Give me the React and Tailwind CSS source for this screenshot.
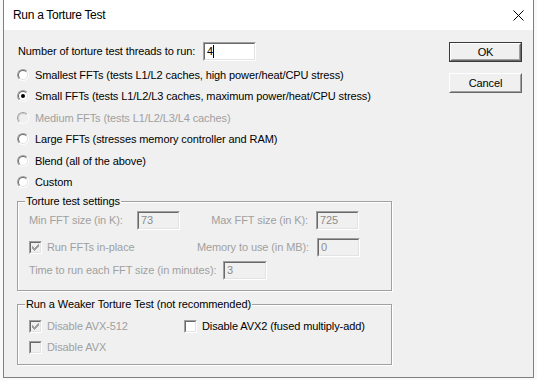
import React from 'react';

const FONT = { fontFamily: '"Liberation Sans", Arial, sans-serif' };

// sunken edit box, classic 3D look
const EditBox = ({ w, value, disabled, caret }) => (
    <div className={`${w} h-[19px] flex border border-t-[#a0a0a0] border-l-[#a0a0a0] border-b-white border-r-white`}>
        <div className={`flex-1 flex items-center pl-[2px] border border-t-[#696969] border-l-[#696969] border-b-[#e3e3e3] border-r-[#e3e3e3] ${disabled ? 'bg-[#f0f0f0] text-[#8c8c8c]' : 'bg-white text-black'}`}>
            <span>{value}</span>
            {caret && <span className="w-px h-[13px] bg-black"></span>}
        </div>
    </div>
);

const Radio = ({ checked, disabled }) => (
    <div className="w-3 h-3 shrink-0 flex rounded-full border border-t-[#a0a0a0] border-l-[#a0a0a0] border-b-white border-r-white">
        <div className={`flex-1 flex items-center justify-center rounded-full border ${disabled ? 'border-t-[#c4c4c4] border-l-[#c4c4c4] border-b-[#ececec] border-r-[#ececec] bg-[#f0f0f0]' : 'border-t-[#696969] border-l-[#696969] border-b-[#e3e3e3] border-r-[#e3e3e3] bg-white'}`}>
            {checked && <div className="w-1 h-1 rounded-full bg-black"></div>}
        </div>
    </div>
);

const Check = ({ checked, disabled }) => (
    <div className="w-[13px] h-[13px] shrink-0 flex border border-t-[#a0a0a0] border-l-[#a0a0a0] border-b-white border-r-white">
        <div className={`flex-1 flex items-center justify-center border border-t-[#696969] border-l-[#696969] border-b-[#e3e3e3] border-r-[#e3e3e3] ${disabled ? 'bg-[#f0f0f0]' : 'bg-white'}`}>
            {checked && (
                <svg width="7" height="7" viewBox="0 0 7 7" shapeRendering="crispEdges">
                    {[2, 3, 4, 3, 2, 1, 0].map((top, i) => (
                        <rect key={i} x={i} y={top} width="1" height="3" fill={disabled ? '#a0a0a0' : '#000'} />
                    ))}
                </svg>
            )}
        </div>
    </div>
);

const RadioRow = ({ label, checked, disabled }) => (
    <div className="h-[21.5px] flex items-center gap-[6px]">
        <Radio checked={checked} disabled={disabled} />
        <span className={disabled ? 'text-[#a0a0a0]' : 'text-black'}>{label}</span>
    </div>
);

const Group = ({ title, h, children }) => (
    <div className={`relative w-[375px] ${h} border border-[#a0a0a0] shadow-[inset_1px_1px_0_#fff,1px_1px_0_#fff]`}>
        <span className="absolute left-[7px] -top-[8px] px-px bg-[#f0f0f0] leading-[14px]">{title}</span>
        {children}
    </div>
);

const Button = ({ label, isDefault }) => (
    <div className={`w-[73px] h-[20px] flex ${isDefault ? 'border border-[#3a3a3a]' : ''}`}>
        <div className="flex-1 flex border border-t-white border-l-white border-b-[#696969] border-r-[#696969]">
            <div className="flex-1 flex items-center justify-center border border-t-[#f0f0f0] border-l-[#f0f0f0] border-b-[#a0a0a0] border-r-[#a0a0a0] bg-[#f0f0f0]">
                {label}
            </div>
        </div>
    </div>
);

export default function App() {
    return (
        <div className="w-[537px] h-[380px] bg-[#f9f9f9] overflow-hidden text-[11px] tracking-[-0.1px] text-black" style={FONT}>
            <div className="ml-[3px] w-[531px] h-[378px] flex flex-col border-x border-b border-[#7f7f7f] bg-[#f0f0f0]">
                {/* title bar */}
                <div className="h-[30px] bg-white flex items-center justify-between pl-[9px] pr-[9px]">
                    <span className="text-[12px] tracking-[-0.3px]">Run a Torture Test</span>
                    <svg width="11" height="11" viewBox="0 0 11 11">
                        <path d="M0.5 0.5 L10.5 10.5 M10.5 0.5 L0.5 10.5" stroke="#000" strokeWidth="1" />
                    </svg>
                </div>

                <div className="flex-1 flex">
                    <div className="pl-[13px] flex flex-col">
                        <div className="mt-[12px] h-[19px] flex items-center">
                            <span className="w-[186px] pl-px">Number of torture test threads to run:</span>
                            <EditBox w="w-[53px]" value="4" caret />
                        </div>

                        <div className="mt-[3px] flex flex-col">
                            <RadioRow label="Smallest FFTs (tests L1/L2 caches, high power/heat/CPU stress)" />
                            <RadioRow label="Small FFTs (tests L1/L2/L3 caches, maximum power/heat/CPU stress)" checked />
                            <RadioRow label="Medium FFTs (tests L1/L2/L3/L4 caches)" disabled />
                            <RadioRow label="Large FFTs (stresses memory controller and RAM)" />
                            <RadioRow label="Blend (all of the above)" />
                            <RadioRow label="Custom" />
                        </div>

                        <div className="mt-[8px]">
                            <Group title="Torture test settings" h="h-[90px]">
                                <div className="pl-[11px] flex flex-col text-[#a0a0a0]">
                                    <div className="mt-[9px] h-[19px] flex items-center">
                                        <span className="w-[108px]">Min FFT size (in K):</span>
                                        <EditBox w="w-[43px]" value="73" disabled />
                                        <span className="w-[128px] text-right">Max FFT size (in K):</span>
                                        <div className="ml-[8px]"><EditBox w="w-[43px]" value="725" disabled /></div>
                                    </div>
                                    <div className="mt-[8px] h-[19px] flex items-center">
                                        <div className="w-[151px] flex items-center gap-[5px]">
                                            <Check checked disabled />
                                            <span>Run FFTs in-place</span>
                                        </div>
                                        <span className="w-[129px] text-right">Memory to use (in MB):</span>
                                        <div className="ml-[8px]"><EditBox w="w-[43px]" value="0" disabled /></div>
                                    </div>
                                    <div className="mt-[4px] h-[19px] flex items-center">
                                        <span className="w-[194px]">Time to run each FFT size (in minutes):</span>
                                        <EditBox w="w-[44px]" value="3" disabled />
                                    </div>
                                </div>
                            </Group>
                        </div>

                        <div className="mt-[13px]">
                            <Group title="Run a Weaker Torture Test (not recommended)" h="h-[61px]">
                                <div className="pl-[11px] flex flex-col">
                                    <div className="mt-[15px] h-[13px] flex items-center">
                                        <div className="w-[155px] flex items-center gap-[5px] text-[#a0a0a0]">
                                            <Check checked disabled />
                                            <span>Disable AVX-512</span>
                                        </div>
                                        <div className="flex items-center gap-[5px]">
                                            <Check />
                                            <span>Disable AVX2 (fused multiply-add)</span>
                                        </div>
                                    </div>
                                    <div className="mt-[8px] h-[13px] flex items-center gap-[5px] text-[#a0a0a0]">
                                        <Check disabled />
                                        <span>Disable AVX</span>
                                    </div>
                                </div>
                            </Group>
                        </div>
                    </div>

                    <div className="ml-auto mr-[11px] mt-[12px] flex flex-col gap-[11px]">
                        <Button label="OK" isDefault />
                        <Button label="Cancel" />
                    </div>
                </div>
            </div>
        </div>
    );
}
